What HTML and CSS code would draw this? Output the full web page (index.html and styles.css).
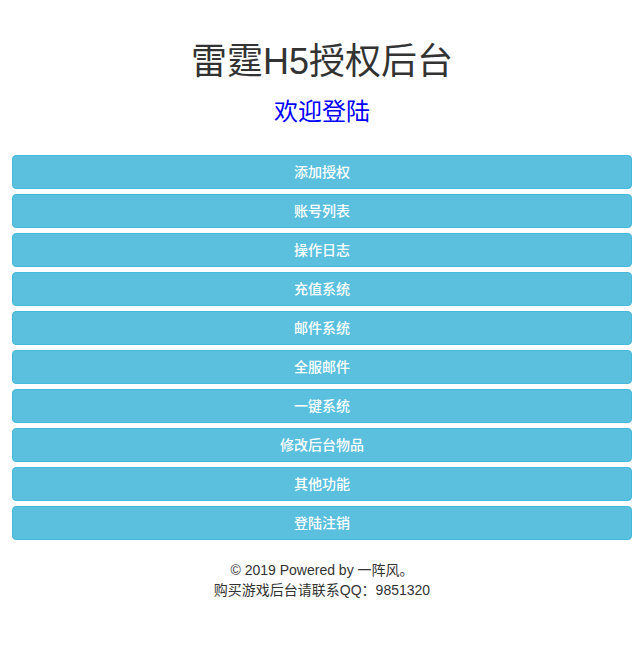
FILE: index.html
```html
<!DOCTYPE html>
<html lang="zh-CN">
<head>
<meta charset="utf-8">
<title>雷霆H5授权后台</title>
<link rel="stylesheet" href="styles.css">
</head>
<body>
<div class="page">
  <h1 class="title">雷霆H5授权后台</h1>
  <h3 class="welcome">欢迎登陆</h3>
  <div class="menu">
    <a class="btn" href="#">添加授权</a>
    <a class="btn" href="#">账号列表</a>
    <a class="btn" href="#">操作日志</a>
    <a class="btn" href="#">充值系统</a>
    <a class="btn" href="#">邮件系统</a>
    <a class="btn" href="#">全服邮件</a>
    <a class="btn" href="#">一键系统</a>
    <a class="btn" href="#">修改后台物品</a>
    <a class="btn" href="#">其他功能</a>
    <a class="btn" href="#">登陆注销</a>
  </div>
  <div class="footer">
    <p>© 2019 Powered by 一阵风。</p>
    <p>购买游戏后台请联系QQ：9851320</p>
  </div>
</div>
</body>
</html>
```

FILE: styles.css
```css
* { box-sizing: border-box; }
html, body {
  margin: 0;
  padding: 0;
  background: #fff;
}
body {
  font-family: "Liberation Sans", Arial, "Noto Sans CJK SC", sans-serif;
  font-size: 14px;
  line-height: 20px;
  color: #333;
}
.page {
  padding: 0 12px;
}
.title {
  margin: 42px 0 10px;
  font-size: 36px;
  font-weight: 400;
  line-height: 40px;
  text-align: center;
  color: #333;
}
.welcome {
  margin: 17px 0 30px;
  font-size: 24px;
  font-weight: 400;
  line-height: 26px;
  text-align: center;
  color: #0000ff;
}
.menu {
  display: flex;
  flex-direction: column;
  gap: 5px;
}
.btn {
  display: block;
  height: 34px;
  padding: 6px 12px;
  font-size: 14px;
  font-weight: 500;
  line-height: 20px;
  text-align: center;
  color: #fff;
  text-decoration: none;
  background: #5bc0de;
  border: 1px solid #46b8da;
  border-radius: 4px;
}
.footer {
  margin-top: 20px;
  text-align: center;
}
.footer p {
  margin: 0;
}
```
